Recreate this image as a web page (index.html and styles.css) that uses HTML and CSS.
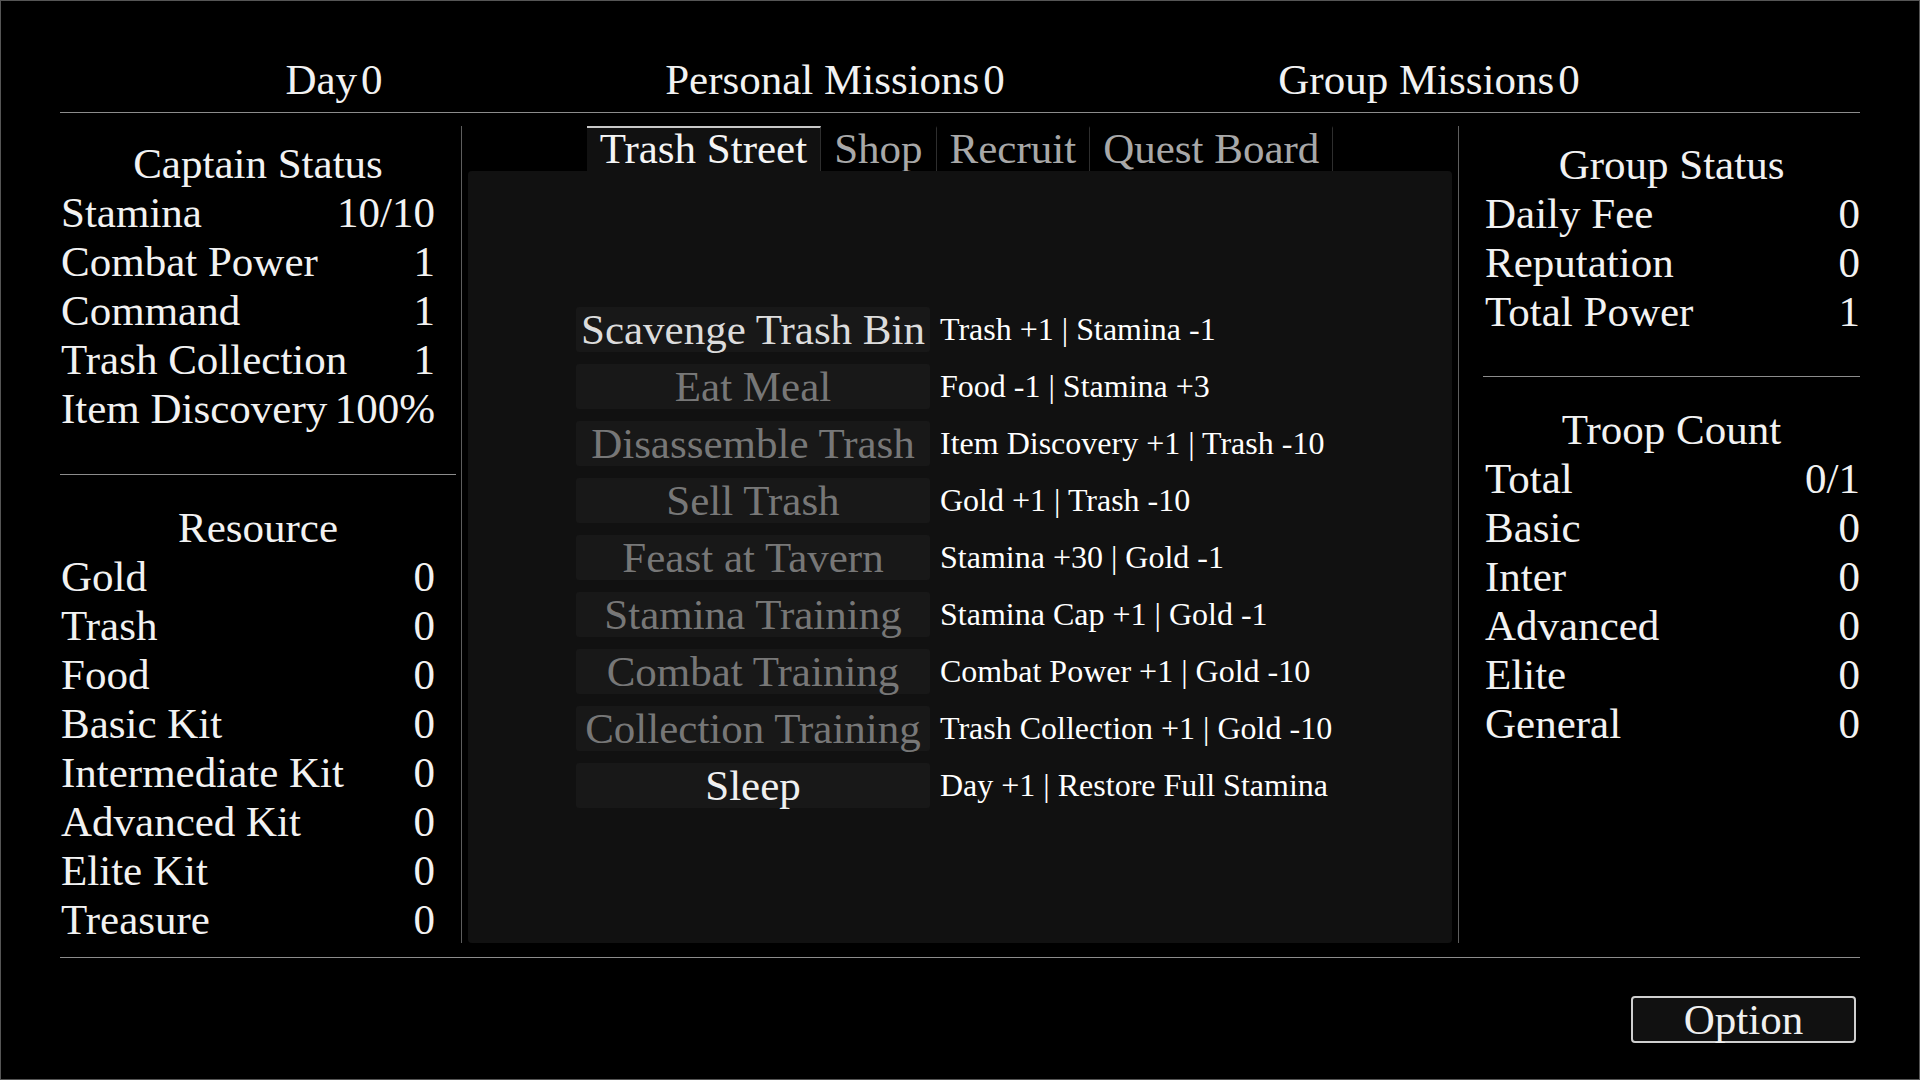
FILE: index.html
```html
<!DOCTYPE html>
<html lang="en">
<head>
<meta charset="utf-8">
<title>Trash Street</title>
<link rel="stylesheet" href="styles.css">
</head>
<body>
<div class="screen">
  <header class="topbar">
    <div class="stat"><span>Day</span><span class="num">0</span></div>
    <div class="stat"><span>Personal Missions</span><span class="num">0</span></div>
    <div class="stat"><span>Group Missions</span><span class="num">0</span></div>
  </header>

  <main class="main">
    <aside class="side side-left">
      <section class="block">
        <h2 class="block-title">Captain Status</h2>
        <div class="row"><span>Stamina</span><span>10/10</span></div>
        <div class="row"><span>Combat Power</span><span>1</span></div>
        <div class="row"><span>Command</span><span>1</span></div>
        <div class="row"><span>Trash Collection</span><span>1</span></div>
        <div class="row"><span>Item Discovery</span><span>100%</span></div>
      </section>
      <section class="block">
        <h2 class="block-title">Resource</h2>
        <div class="row"><span>Gold</span><span>0</span></div>
        <div class="row"><span>Trash</span><span>0</span></div>
        <div class="row"><span>Food</span><span>0</span></div>
        <div class="row"><span>Basic Kit</span><span>0</span></div>
        <div class="row"><span>Intermediate Kit</span><span>0</span></div>
        <div class="row"><span>Advanced Kit</span><span>0</span></div>
        <div class="row"><span>Elite Kit</span><span>0</span></div>
        <div class="row"><span>Treasure</span><span>0</span></div>
      </section>
    </aside>

    <div class="vline"></div>

    <div class="center">
      <nav class="tabs">
        <div class="tab active">Trash Street</div>
        <div class="tab">Shop</div>
        <div class="tab">Recruit</div>
        <div class="tab">Quest Board</div>
      </nav>
      <div class="panel">
        <div class="actions">
          <button class="act on">Scavenge Trash Bin</button><span class="desc">Trash +1 | Stamina -1</span>
          <button class="act">Eat Meal</button><span class="desc">Food -1 | Stamina +3</span>
          <button class="act">Disassemble Trash</button><span class="desc">Item Discovery +1 | Trash -10</span>
          <button class="act">Sell Trash</button><span class="desc">Gold +1 | Trash -10</span>
          <button class="act">Feast at Tavern</button><span class="desc">Stamina +30 | Gold -1</span>
          <button class="act">Stamina Training</button><span class="desc">Stamina Cap +1 | Gold -1</span>
          <button class="act">Combat Training</button><span class="desc">Combat Power +1 | Gold -10</span>
          <button class="act">Collection Training</button><span class="desc">Trash Collection +1 | Gold -10</span>
          <button class="act bright">Sleep</button><span class="desc">Day +1 | Restore Full Stamina</span>
        </div>
      </div>
    </div>

    <div class="vline vline-right"></div>

    <aside class="side side-right">
      <section class="block">
        <h2 class="block-title">Group Status</h2>
        <div class="row"><span>Daily Fee</span><span>0</span></div>
        <div class="row"><span>Reputation</span><span>0</span></div>
        <div class="row"><span>Total Power</span><span>1</span></div>
      </section>
      <section class="block">
        <h2 class="block-title">Troop Count</h2>
        <div class="row"><span>Total</span><span>0/1</span></div>
        <div class="row"><span>Basic</span><span>0</span></div>
        <div class="row"><span>Inter</span><span>0</span></div>
        <div class="row"><span>Advanced</span><span>0</span></div>
        <div class="row"><span>Elite</span><span>0</span></div>
        <div class="row"><span>General</span><span>0</span></div>
      </section>
    </aside>
  </main>

  <footer class="footer">
    <button class="option">Option</button>
  </footer>
</div>
</body>
</html>
```

FILE: styles.css
```css
* {
  box-sizing: border-box;
  margin: 0;
  padding: 0;
}

html, body {
  background: #000;
}

body {
  font-family: "Liberation Serif", "Times New Roman", serif;
  color: #f2f2f2;
}

.screen {
  width: 1920px;
  height: 1080px;
  border: 1px solid #555;
  padding: 0 59px;
  display: flex;
  flex-direction: column;
  background: #000;
  overflow: hidden;
}

/* ---------- top bar ---------- */
.topbar {
  display: grid;
  grid-template-columns: 548px 454px 734px;
  padding-top: 54px;
  padding-bottom: 8px;
  border-bottom: 1px solid #8c8c8c;
  font-size: 43px;
  line-height: 49px;
}

.stat {
  text-align: center;
  white-space: nowrap;
}

.stat .num {
  margin-left: 4px;
}

/* ---------- main area ---------- */
.main {
  display: flex;
  padding-top: 13px;
  height: 830px;
}

.side {
  display: flex;
  flex-direction: column;
}

.side-left {
  width: 396px;
  padding-top: 13px;
}

.side-right {
  width: 377px;
  margin-left: 24px;
  padding-top: 14px;
}

.vline {
  width: 1px;
  background: #5e5e5e;
  margin-left: 5px;
}

.vline-right {
  margin-left: 6px;
}

.block-title {
  font-size: 43px;
  font-weight: normal;
  line-height: 49px;
  text-align: center;
}

.row {
  display: flex;
  justify-content: space-between;
  font-size: 43px;
  line-height: 49px;
  white-space: nowrap;
}

.side-left .row {
  padding-right: 21px;
  padding-left: 1px;
}

.side-right .row {
  padding-right: 0;
  padding-left: 2px;
}

.block:first-child {
  padding-bottom: 40px;
}

.side-left .block:first-child {
  padding-bottom: 41px;
}

.block + .block {
  border-top: 1px solid #8c8c8c;
  padding-top: 28px;
}

/* ---------- center ---------- */
.center {
  width: 984px;
  margin-left: 6px;
  display: flex;
  flex-direction: column;
}

.tabs {
  display: flex;
  justify-content: center;
  height: 45px;
}

.tab {
  padding: 0 13px;
  font-size: 43px;
  line-height: 42px;
  color: #a8a8a8;
  border-top: 2px solid transparent;
  border-right: 1px solid #2e2e2e;
  white-space: nowrap;
}

.tab.active {
  background: #111;
  color: #f5f5f5;
  border-top-color: #c8c8c8;
}

.panel {
  flex: 1;
  background: #111;
  border-radius: 4px;
  display: flex;
  align-items: center;
  justify-content: center;
}

.actions {
  display: grid;
  grid-template-columns: 354px 404px;
  column-gap: 10px;
  row-gap: 12px;
  align-items: center;
}

.act {
  height: 45px;
  background: #181818;
  border: none;
  border-radius: 3px;
  font-family: inherit;
  font-size: 43px;
  line-height: 45px;
  color: #777;
  white-space: nowrap;
  cursor: pointer;
}

.act.on {
  color: #dcdcdc;
}

.act.bright {
  color: #f0f0f0;
}

.desc {
  font-size: 32px;
  color: #fff;
  white-space: nowrap;
}

/* ---------- footer ---------- */
.footer {
  margin-top: 14px;
  border-top: 1px solid #8c8c8c;
  padding-top: 38px;
  padding-right: 4px;
  display: flex;
  justify-content: flex-end;
}

.option {
  width: 225px;
  height: 47px;
  border: 2px solid #cfcfcf;
  border-radius: 4px;
  background: #111;
  color: #f0f0f0;
  font-family: inherit;
  font-size: 43px;
  line-height: 41px;
  cursor: pointer;
}
```
